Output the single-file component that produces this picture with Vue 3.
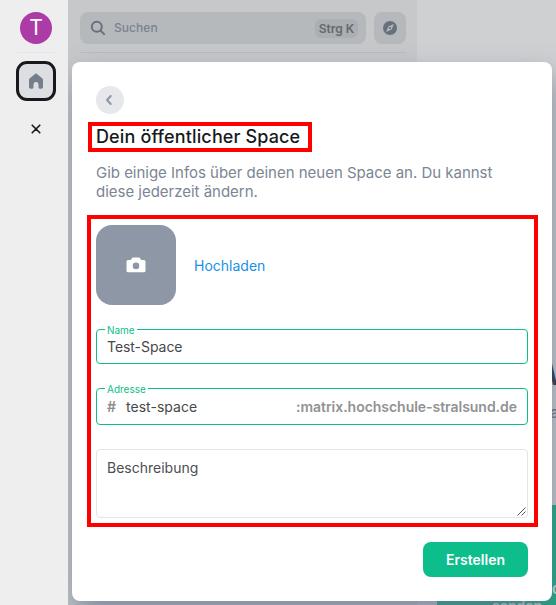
<script setup>
const title = 'Dein öffentlicher Space'
const server = ':matrix.hochschule-stralsund.de'
</script>

<template>
  <div class="app">
    <nav class="rail">
      <div class="avatar">T</div>
      <div class="rail-line"></div>
      <div class="home">
        <svg width="14" height="16" viewBox="0 0 14 16"><path d="M7 0.2 13.2 5.2Q14 5.9 14 6.9V14q0 1.7-1.7 1.7H11q-1.5 0-1.5-1.5v-3Q9.500 9 7 9T4.500 11.200v3q0 1.500-1.500 1.500H1.700Q0 15.700 0 14V6.900Q0 5.900.8 5.200Z" fill="#737d8c" /></svg>
      </div>
      <svg class="close" width="10" height="10" viewBox="0 0 10 10"><path d="M1.200 1.200 8.800 8.800M8.800 1.200 1.200 8.800" stroke="#17191c" stroke-width="1.600" stroke-linecap="round" /></svg>
    </nav>

    <section class="panel">
      <div class="tools">
        <div class="search">
          <svg width="16" height="16" viewBox="0 0 16 16" fill="none" stroke="#68707e" stroke-width="2" stroke-linecap="round"><circle cx="6.800" cy="6.800" r="5" /><path d="m10.600 10.600 3.500 3.500" /></svg>
          <span class="search-text">Suchen</span>
          <kbd>Strg K</kbd>
        </div>
        <div class="explore">
          <svg width="14" height="14" viewBox="0 0 14 14"><circle cx="7" cy="7" r="7" fill="#68707e" /><path d="M11 3 8.600 8.600 3 11 5.400 5.400Z" fill="#b5b9bd" /><circle cx="7" cy="7" r="1.100" fill="#68707e" /></svg>
        </div>
      </div>
      <div class="panel-line"></div>
    </section>

    <main class="welcome">
      <div class="headline">W</div>
      <div class="subline">a</div>
      <div class="tile"><span class="tile-a">o</span><span class="tile-b">senden</span></div>
    </main>

    <div class="dialog">
      <button class="back" aria-label="Zurück">
        <svg width="8" height="12" viewBox="0 0 8 12" fill="none" stroke="#8d97a5" stroke-width="2" stroke-linecap="round" stroke-linejoin="round"><path d="M5.700 2 2 6l3.700 4" /></svg>
      </button>
      <h2>{{ title }}</h2>
      <p>Gib einige Infos über deinen neuen Space an. Du kannst diese jederzeit ändern.</p>

      <div class="form">
        <div class="upload">
          <div class="picture">
            <svg width="20" height="16" viewBox="0 0 20 16"><path fill-rule="evenodd" d="M7 .5h6q.7 0 1.200.8l.8 1.600h2.800q1.700 0 1.700 1.500v9.300q0 1.600-1.600 1.600H2.100Q.5 15.300.5 13.700V4.400q0-1.500 1.600-1.500H5l.8-1.600Q6.300.5 7 .5ZM10 5.600a3.300 3.300 0 1 0 0 6.600 3.300 3.300 0 0 0 0-6.600Z" fill="#fff" /></svg>
          </div>
          <span class="link">Hochladen</span>
        </div>
        <div class="field name"><label>Name</label><span>Test-Space</span></div>
        <div class="field address">
          <label>Adresse</label><b class="hash">#</b><span class="slug">test-space</span><b class="server">{{ server }}</b>
        </div>
        <div class="area">
          <span>Beschreibung</span>
          <svg width="9" height="9" viewBox="0 0 9 9" stroke="#555" stroke-width="1"><path d="M.5 8.500 8.500.5M4.500 8.500l4-4" /></svg>
        </div>
      </div>
      <button class="create">Erstellen</button>
    </div>

    <div class="mark mark-title"></div>
    <div class="mark mark-form"></div>
  </div>
</template>

<style>
body { margin: 0; overflow: hidden; }
</style>

<style scoped>
* { box-sizing: border-box; }
.app {
  position: relative;
  display: grid;
  grid-template-columns: 68px 349px 139px;
  width: 556px;
  height: 605px;
  overflow: hidden;
  background: #cfd0d2;
  font-family: Inter, "Liberation Sans", sans-serif;
  font-size: 14px;
}
button { border: 0; padding: 0; font: inherit; }
svg { display: block; flex: none; }
.rail {
  position: relative;
  z-index: 2;
  display: flex;
  flex-direction: column;
  align-items: center;
  padding: 12px 0 0 4px;
  background: #eee;
}
.avatar {
  width: 32px;
  height: 32px;
  border-radius: 50%;
  background: #ac3ba8;
  color: #fff;
  font-size: 21px;
  line-height: 32px;
  text-align: center;
}
.rail-line { width: 36px; height: 1px; margin-top: 8px; background: #e1e6ef; }
.home {
  display: flex;
  align-items: center;
  justify-content: center;
  width: 40px;
  height: 40px;
  margin-top: 8px;
  border: 3px solid #17191c;
  border-radius: 11px;
  background: #dcdee2;
}
.close { margin-top: 23px; }
.panel { padding: 12px 11px 0 12px; background: #c7c8ca; }
.tools { display: flex; gap: 8px; }
.search {
  display: flex;
  align-items: center;
  width: 286px;
  height: 32px;
  padding: 0 8px 0 10px;
  border-radius: 8px;
  background: #b5b9bc;
}
.search-text { margin: -1px 0 0 8px; color: #7a828e; font-size: 12px; font-weight: 500; letter-spacing: .05px; }
kbd {
  width: 43px;
  height: 19px;
  margin-left: auto;
  border-radius: 6px;
  background: #abaeb3;
  color: #66696d;
  font: 600 12px/19px Inter, sans-serif;
  text-align: center;
}
.explore {
  display: flex;
  align-items: center;
  justify-content: center;
  width: 32px;
  height: 32px;
  border-radius: 8px;
  background: #b5b9bc;
}
.panel-line { width: 326px; height: 1px; margin-top: 8px; background: #b5bbc8; }
.welcome { position: relative; }
.headline { position: absolute; left: 129px; top: 354px; color: #202633; font-size: 32px; font-weight: 600; }
.subline { position: absolute; left: 133px; top: 402px; color: #61708b; font-size: 16px; font-weight: 500; }
.tile { position: absolute; left: 20px; top: 505px; width: 160px; height: 120px; background: #14ac7f; color: #e2e6e8; font-size: 15px; font-weight: 600; }
.tile-a { position: absolute; left: 115px; top: 74px; }
.tile-b { position: absolute; left: 55px; top: 92px; font-size: 14px; }
.dialog {
  position: absolute;
  z-index: 1;
  left: 72px;
  top: 62px;
  display: flex;
  flex-direction: column;
  align-items: flex-start;
  width: 480px;
  height: 539px;
  padding: 24px;
  border-radius: 8px;
  background: #fff;
  box-shadow: 2px 15px 30px 0 rgba(97, 112, 139, .7);
}
.back {
  display: flex;
  align-items: center;
  justify-content: center;
  width: 28px;
  height: 28px;
  padding-right: 2px;
  border-radius: 50%;
  background: #e7e8ec;
}
h2 { margin: 10px 0 0; color: #17191c; font-size: 18px; font-weight: 500; line-height: 26px; letter-spacing: .13px; white-space: nowrap; }
p { width: 420px; margin: 13px 0 0; color: #7b8594; font-size: 15px; line-height: 19px; letter-spacing: -.02px; }
.form { width: 432px; margin-top: 24px; }
.upload { display: flex; align-items: center; gap: 18px; }
.picture {
  display: flex;
  align-items: center;
  justify-content: center;
  width: 80px;
  height: 80px;
  border-radius: 16px;
  background: #8d97a5;
}
.link { color: #1a91e6; }
.field {
  position: relative;
  display: flex;
  align-items: center;
  margin-top: 24px;
  padding: 0 10px;
  border: 1px solid #0dbd8b;
  border-radius: 4px;
  color: #46484b;
}
.field label {
  position: absolute;
  left: 8px;
  top: -6px;
  padding: 0 2px;
  background: #fff;
  color: #0dbd8b;
  font-size: 10px;
  line-height: 13px;
}
.name { height: 35px; letter-spacing: -.05px; }
.address { height: 37px; }
.slug { letter-spacing: .04px; }
.hash { width: 19px; color: #8d8d8d; font-weight: 600; }
.server { margin-left: auto; color: #929292; font-weight: 600; letter-spacing: -.03px; white-space: nowrap; }
.area {
  position: relative;
  height: 69px;
  margin-top: 24px;
  padding: 9px 10px;
  border: 1px solid #e3e5e8;
  border-radius: 4px;
  color: #4c4e51;
  line-height: 17px;
}
.area svg { position: absolute; right: 1px; bottom: 1px; }
.create {
  align-self: flex-end;
  width: 105px;
  height: 35px;
  margin-top: 24px;
  border-radius: 8px;
  background: #0dbd8b;
  color: #fff;
  font-weight: 600;
}
.mark { position: absolute; z-index: 4; border: 4px solid #f00; }
.mark-title { left: 88px; top: 122px; width: 224px; height: 30px; }
.mark-form { left: 87px; top: 215px; width: 451px; height: 312px; }
</style>
